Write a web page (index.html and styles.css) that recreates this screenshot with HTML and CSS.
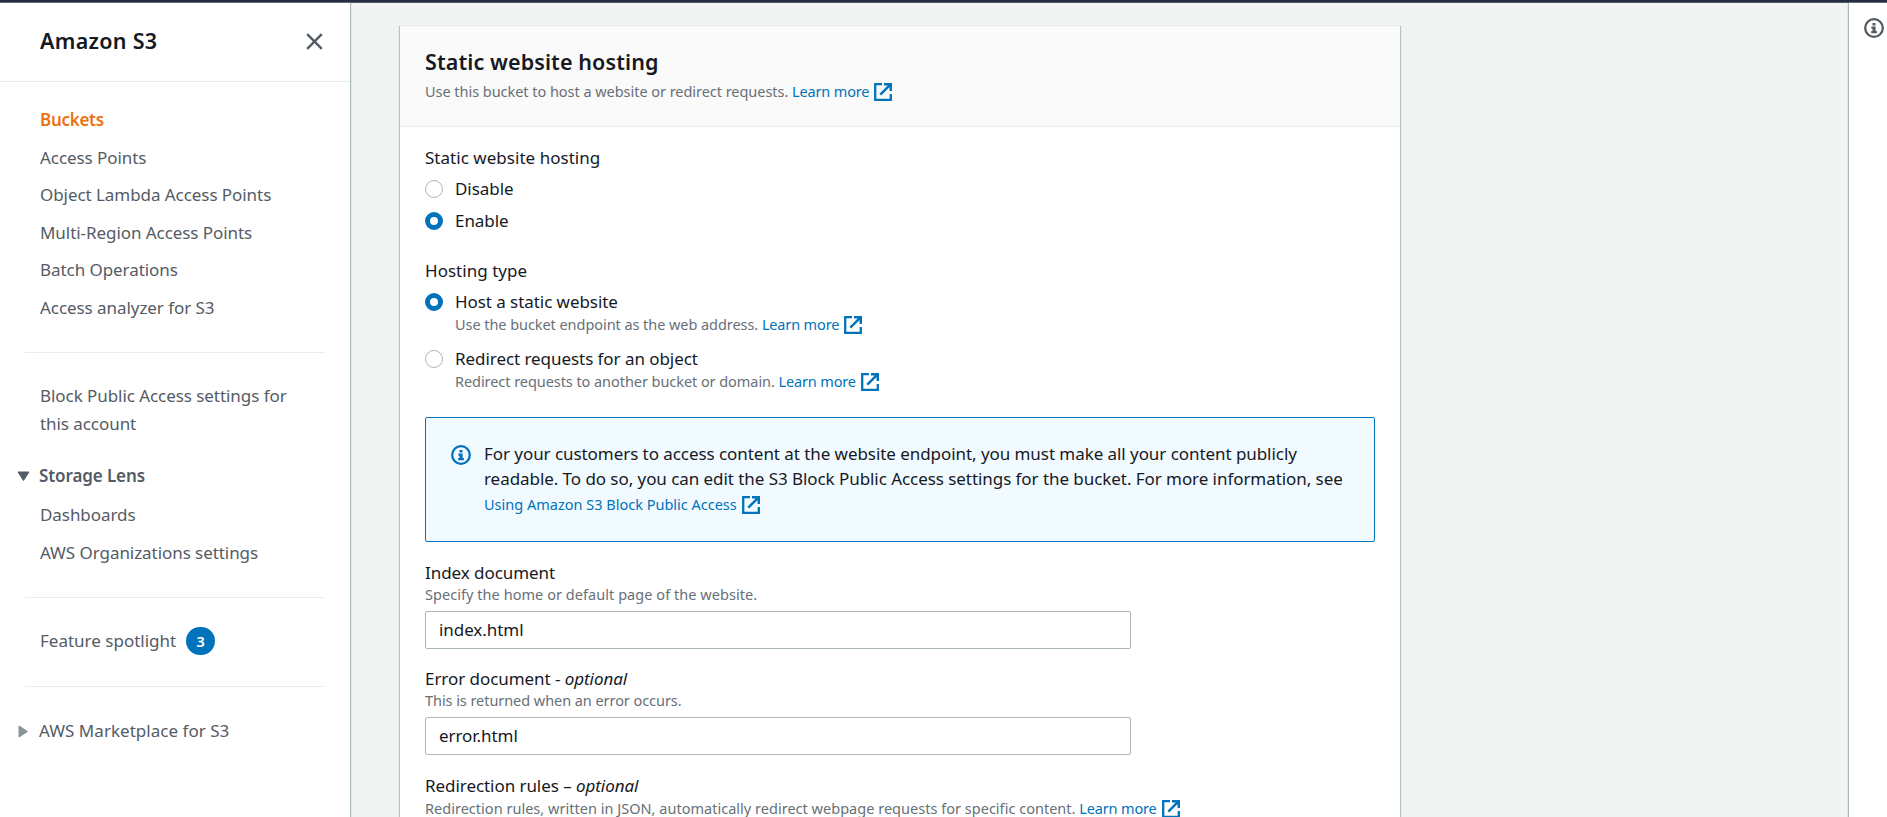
FILE: index.html
```html
<!DOCTYPE html>
<html lang="en">
<head>
<meta charset="utf-8">
<title>Static website hosting</title>
<link rel="stylesheet" href="styles.css">
</head>
<body>
<svg class="defs" width="0" height="0">
  <symbol id="ext" viewBox="0 0 18 18"><g fill="none" stroke="currentColor" stroke-width="2.3"><path d="M8 1.200H1.200v15.600h15.600V11"/><path d="M10 1.200h6.800V8M16.800 1.200 6.300 11.700" stroke-width="2.500"/></g></symbol>
  <symbol id="info" viewBox="0 0 20 20"><circle cx="10" cy="10" r="8.8" fill="none" stroke="currentColor" stroke-width="2.3"/><path d="M8.500 5h3v2.600h-3zM7.400 8.600h4.200v4.500h1.300V15.200H7.200v-2.100h1.300v-2.400h-1.100z" fill="currentColor"/></symbol>
</svg>
<div class="topbar"></div>
<div class="app">
  <nav class="side">
    <div class="side-head">
      <h2>Amazon S3</h2>
      <svg class="close" viewBox="0 0 17 17"><path d="M1.2 1.2l14.6 14.6M15.8 1.2 1.2 15.8" stroke="currentColor" stroke-width="2.4"/></svg>
    </div>
    <ul class="links first">
      <li class="active">Buckets</li>
      <li>Access Points</li>
      <li>Object Lambda Access Points</li>
      <li>Multi-Region Access Points</li>
      <li>Batch Operations</li>
      <li>Access analyzer for S3</li>
    </ul>
    <hr>
    <div class="links block">Block Public Access settings for this account</div>
    <div class="group open"><svg class="caret" viewBox="0 0 13 13"><path d="M1 2h11L6.500 10.500z" fill="currentColor" stroke="currentColor" stroke-linejoin="round"/></svg>Storage Lens</div>
    <ul class="links sub">
      <li>Dashboards</li>
      <li>AWS Organizations settings</li>
    </ul>
    <hr>
    <div class="links feature">Feature spotlight <span class="badge">3</span></div>
    <hr>
    <div class="group market"><svg class="caret" viewBox="0 0 13 13"><path d="M2 1v11l8.500-5.500z" fill="currentColor" stroke="currentColor" stroke-linejoin="round"/></svg>AWS Marketplace for S3</div>
  </nav>
  <main class="main">
    <section class="card">
      <header class="card-head">
        <h1>Static website hosting</h1>
        <p class="hint">Use this bucket to host a website or redirect requests. <a>Learn more<svg class="ext"><use href="#ext"/></svg></a></p>
      </header>
      <div class="card-body">
        <div class="label">Static website hosting</div>
        <div class="radios">
          <div class="radio"><i class="dot"></i><div>Disable</div></div>
          <div class="radio"><i class="dot on"></i><div>Enable</div></div>
        </div>
        <div class="label type">Hosting type</div>
        <div class="radios wide">
          <div class="radio"><i class="dot on"></i><div>Host a static website<p class="hint">Use the bucket endpoint as the web address. <a>Learn more<svg class="ext"><use href="#ext"/></svg></a></p></div></div>
          <div class="radio"><i class="dot"></i><div>Redirect requests for an object<p class="hint">Redirect requests to another bucket or domain. <a>Learn more<svg class="ext"><use href="#ext"/></svg></a></p></div></div>
        </div>
        <div class="alert">
          <svg class="info"><use href="#info"/></svg>
          <div>For your customers to access content at the website endpoint, you must make all your content publicly<br>readable. To do so, you can edit the S3 Block Public Access settings for the bucket. For more information, see<br><a>Using Amazon S3 Block Public Access<svg class="ext"><use href="#ext"/></svg></a></div>
        </div>
        <div class="field">
          <div class="name">Index document</div>
          <p class="hint specify">Specify the home or default page of the website.</p>
          <div class="input">index.html</div>
        </div>
        <div class="field">
          <div class="name">Error document - <em>optional</em></div>
          <p class="hint">This is returned when an error occurs.</p>
          <div class="input">error.html</div>
        </div>
        <div class="field">
          <div class="name">Redirection rules – <em>optional</em></div>
          <p class="hint rules">Redirection rules, written in JSON, automatically redirect webpage requests for specific content. <a>Learn more<svg class="ext"><use href="#ext"/></svg></a></p>
        </div>
      </div>
    </section>
  </main>
  <aside class="help"><svg class="info"><use href="#info"/></svg></aside>
</div>
</body>
</html>
```
FILE: styles.css
```css
* { box-sizing: border-box; margin: 0; padding: 0; }
html, body { height: 817px; overflow: hidden; }
body {
  font: 17px/25px "Noto Sans", sans-serif;
  letter-spacing: -0.06px;
  color: #16191f;
  background: #f2f3f3;
}
.defs { position: absolute; }
ul { list-style: none; }
.topbar { height: 3px; background: #232f3e; border-bottom: 1px solid #545b64; }
.app { display: flex; height: 814px; }

.side { width: 350px; flex: none; background: #fff; color: #545b64; line-height: 28px; box-shadow: 1px 0 1px #aab7b8; }
.side-head { display: flex; justify-content: space-between; align-items: flex-start; height: 79px; padding: 24px 27.5px 0 40px; border-bottom: 1px solid #eaeded; }
h1, h2 { font-size: 21.5px; line-height: 28px; font-weight: 600; letter-spacing: 0.1px; color: #16191f; }
h2 { letter-spacing: 0.3px; }
.close { width: 17px; height: 17px; margin-top: 6px; }
.links { padding: 0 40px; }
.first { padding-top: 24px; }
.links li + li { margin-top: 9.5px; }
.active { color: #ec7211; font-weight: 600; letter-spacing: -0.3px; }
.side hr { border: 0; height: 1px; background: #eaeded; margin: 30.5px 25px 29px; }
.group { display: flex; align-items: center; gap: 9.5px; padding-left: 16.500px; }
.open { margin-top: 24px; font-weight: 600; letter-spacing: -0.1px; }
.caret { width: 13px; height: 13px; margin-top: 1px; }
.market { letter-spacing: 0.03px; }
.market .caret { color: #879596; }
.sub { padding-top: 10.500px; }
.sub li + li { margin-top: 10.500px; }
.sub + hr { margin-top: 30px; }
.feature { display: flex; align-items: center; gap: 10px; letter-spacing: 0; }
.feature + hr { margin-top: 31px; margin-bottom: 29.5px; }
.badge { width: 29px; height: 28px; border-radius: 14px; background: #0073bb; color: #fff; font-size: 14.5px; font-weight: 600; text-align: center; }

.main { flex: 1; padding: 23px 0 0 50px; overflow: hidden; }
.card { width: 1000px; height: 900px; background: #fff; box-shadow: 0 1px 1px 1px #bcc5c5; }
.card-head { height: 101px; padding: 21.5px 25px 0; background: #fafafa; border-bottom: 1px solid #eaeded; }
.card-head .hint { margin-top: 3.500px; line-height: 24px; letter-spacing: -0.04px; }
.hint { font-size: 14.5px; line-height: 22px; color: #687078; letter-spacing: -0.06px; white-space: nowrap; }
a { color: #0073bb; letter-spacing: -0.15px; }
.ext { width: 18px; height: 18px; margin: -4px 0 -4px 5px; vertical-align: 0; }
.card-body { padding: 16.5px 25px 0; }
.label { line-height: 28px; letter-spacing: 0.03px; }
.type { margin-top: 23.5px; }
.radios { display: grid; gap: 7px; padding-top: 4.5px; }
.wide { gap: 10px; }
.radio { display: flex; gap: 12px; }
.radio .hint { margin-top: -1px; margin-bottom: 1px; }
.dot { flex: none; width: 18px; height: 18px; margin-top: 4px; border: 1.500px solid #aab7b8; border-radius: 50%; background: #fff; }
.dot.on { border: 5px solid #0073bb; }
.alert { display: flex; gap: 13px; height: 125px; margin-top: 24px; padding: 22.5px 24px 0 25px; border: 1px solid #0073bb; border-radius: 2px; background: #f1faff; white-space: nowrap; }
.alert a { font-size: 14.5px; letter-spacing: 0; }
.info { flex: none; width: 20px; height: 20px; color: #545b64; }
.alert .info { color: #0073bb; margin-top: 4px; }
.field { margin-top: 17.500px; }
.field .hint { margin-top: -2px; }
.field .rules { margin-top: -1px; letter-spacing: 0.02px; }
.rules a { letter-spacing: -0.15px; }
.field .specify { letter-spacing: 0.05px; }
.input { width: 706px; height: 38px; margin-top: 6px; padding-left: 13px; line-height: 35px; border: 1px solid #aab7b8; border-radius: 2px; }

.help { width: 38px; flex: none; padding: 15px 0 0 15px; background: #fff; box-shadow: -1px 0 1px #aab7b8; }
```
